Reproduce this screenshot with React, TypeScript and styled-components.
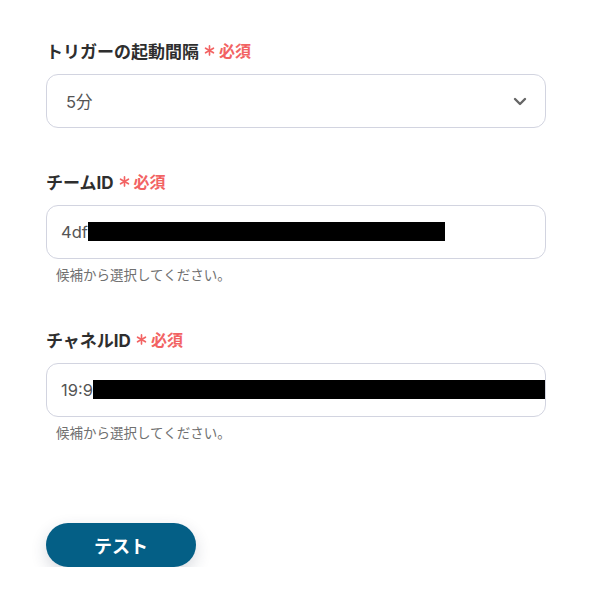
import styled, { createGlobalStyle } from "styled-components";

const GlobalStyle = createGlobalStyle`
  html, body {
    margin: 0;
    padding: 0;
    background: #ffffff;
  }
  body {
    font-family: Inter, "Noto Sans CJK JP", sans-serif;
    color: #333333;
  }
`;

const Form = styled.div`
  width: 500px;
  padding: 38px 0 0 46px;
  display: flex;
  flex-direction: column;
`;

const Field = styled.div`
  display: flex;
  flex-direction: column;
  margin-bottom: 41px;
`;

const Label = styled.div`
  display: flex;
  align-items: center;
  height: 24px;
  font-size: 17px;
  font-weight: 700;
  color: #2e2e2e;
  margin-bottom: 12px;
`;

const Required = styled.span`
  display: inline-flex;
  align-items: center;
  gap: 4px;
  margin-left: 5px;
  font-size: 16px;
  font-weight: 700;
  color: #f26363;
`;

const Box = styled.div<{ $select?: boolean }>`
  box-sizing: border-box;
  height: 54px;
  border: 1px solid #d2d4e0;
  border-radius: 12px;
  display: flex;
  align-items: center;
  padding: 0 14px 0 ${(p) => (p.$select ? 19 : 14)}px;
  font-size: 16.5px;
  color: #555555;
  overflow: hidden;
`;

const Value = styled.span`
  flex-shrink: 0;
`;

const Mask = styled.span<{ $width: number }>`
  display: block;
  width: ${(p) => p.$width}px;
  height: 19px;
  margin-top: -2px;
  background: #000000;
  flex-shrink: 0;
`;

const Chevron = styled.svg`
  margin-left: auto;
  margin-right: 4px;
`;

const Hint = styled.div`
  font-size: 13.5px;
  color: #707070;
  margin: 6px 0 0 10px;
  line-height: 21px;
`;

const Actions = styled.div`
  margin-top: 38px;
`;

const Button = styled.button`
  width: 150px;
  height: 44px;
  border: none;
  border-radius: 22px;
  background: #045f86;
  color: #ffffff;
  font-family: Inter, "Noto Sans CJK JP", sans-serif;
  font-size: 18px;
  font-weight: 700;
  box-shadow: 0 6px 16px rgba(40, 50, 80, 0.18);
  cursor: pointer;
`;

function Asterisk() {
  return (
    <svg width="11" height="11" viewBox="0 0 12 12" fill="none">
      <g stroke="#f26363" strokeWidth="1.8" strokeLinecap="round">
        <line x1="6" y1="1" x2="6" y2="11" />
        <line x1="1.7" y1="3.5" x2="10.3" y2="8.5" />
        <line x1="1.7" y1="8.5" x2="10.3" y2="3.5" />
      </g>
    </svg>
  );
}

function RequiredMark() {
  return (
    <Required>
      <Asterisk />
      必須
    </Required>
  );
}

export default function App() {
  return (
    <>
      <GlobalStyle />
      <Form>
        <Field>
          <Label>
            トリガーの起動間隔
            <RequiredMark />
          </Label>
          <Box $select>
            <Value>5分</Value>
            <Chevron width="14" height="9" viewBox="0 0 14 9" fill="none">
              <path
                d="M2 2l5 5 5-5"
                stroke="#666"
                strokeWidth="2.4"
                strokeLinecap="round"
                strokeLinejoin="round"
              />
            </Chevron>
          </Box>
        </Field>
        <Field>
          <Label>
            チームID
            <RequiredMark />
          </Label>
          <Box>
            <Value>4df</Value>
            <Mask $width={357} />
          </Box>
          <Hint>候補から選択してください。</Hint>
        </Field>
        <Field>
          <Label>
            チャネルID
            <RequiredMark />
          </Label>
          <Box>
            <Value>19:9</Value>
            <Mask $width={460} />
          </Box>
          <Hint>候補から選択してください。</Hint>
        </Field>
        <Actions>
          <Button>テスト</Button>
        </Actions>
      </Form>
    </>
  );
}
